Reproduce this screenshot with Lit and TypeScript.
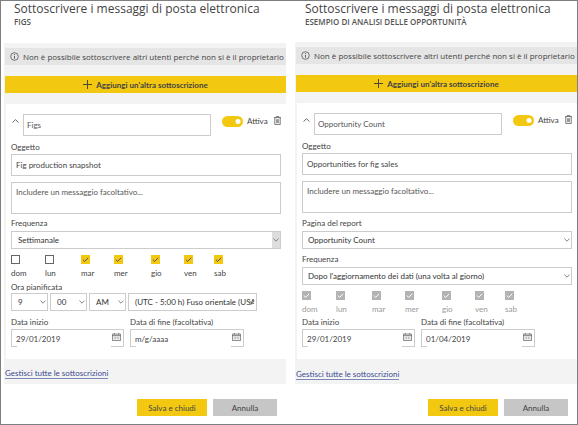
import { LitElement, html, css, svg, nothing } from "lit";
import { customElement, property } from "lit/decorators.js";
import { classMap } from "lit/directives/class-map.js";

interface Subscription {
  id: string;
  source: string;
  name: string;
  subject: string;
  page?: string;
  frequency: string;
  weekly: boolean;
  days: boolean[];
  start: string;
  end: string;
}

const DAYS = ["dom", "lun", "mar", "mer", "gio", "ven", "sab"];

const SUBSCRIPTIONS: Subscription[] = [
  {
    id: "figs",
    source: "FIGS",
    name: "Figs",
    subject: "Fig production snapshot",
    frequency: "Settimanale",
    weekly: true,
    days: [false, false, true, true, true, true, true],
    start: "29/01/2019",
    end: "m/g/aaaa",
  },
  {
    id: "opp",
    source: "ESEMPIO DI ANALISI DELLE OPPORTUNITÀ",
    name: "Opportunity Count",
    subject: "Opportunities for fig sales",
    page: "Opportunity Count",
    frequency: "Dopo l'aggiornamento dei dati (una volta al giorno)",
    weekly: false,
    days: [true, true, true, true, true, true, true],
    start: "29/01/2019",
    end: "01/04/2019",
  },
];

const infoIcon = svg`<svg class="icon" width="9" height="9" viewBox="0 0 9 9" fill="none" stroke="#555" aria-hidden="true">
  <circle cx="4.5" cy="4.5" r="3.8" stroke-width="0.8"/><path d="M4.5 4v2.7M4.5 2.2v1" stroke-width="0.9"/></svg>`;
const plusIcon = svg`<svg class="icon" width="9" height="9" viewBox="0 0 9 9" stroke="#4a4630" aria-hidden="true"><path d="M4.5 0v9M0 4.5h9"/></svg>`;
const upIcon = svg`<svg width="7" height="4" viewBox="0 0 7 4" fill="none" stroke="#666" aria-hidden="true"><path d="M.5 3.6 3.5.7l3 2.9"/></svg>`;
const downIcon = svg`<svg class="arrow" width="6" height="4" viewBox="0 0 6 4" fill="none" stroke="#777" aria-hidden="true"><path d="M.4.6 3 3.2 5.6.6" stroke-width="0.9"/></svg>`;
const tickIcon = svg`<svg class="tick" width="9" height="9" viewBox="0 0 9 9" fill="none" aria-hidden="true"><path d="M1.8 4.6l1.9 1.8 3.5-3.6"/></svg>`;
const trashIcon = svg`<svg width="7" height="9" viewBox="0 0 7 9" fill="none" stroke="#555" stroke-width="0.8" aria-hidden="true">
  <path d="M0 1.6h7M2.3 1.4V.4h2.4v1M.8 1.8v6.8h5.4V1.8"/><path d="M2.5 3.2v4M3.5 3.2v4M4.5 3.2v4" stroke-width="0.6"/></svg>`;
const calendarIcon = svg`<svg class="calendar" width="9" height="8" viewBox="0 0 9 8" fill="none" stroke="#666" stroke-width="0.8" aria-hidden="true">
  <path d="M.4 1.1h8.2v6.5H.4zM.4 2.6h8.2M2.3 0v1.4M6.7 0v1.4"/><path d="M1.6 4.2h5.8M1.6 5.8h5.8" stroke-dasharray="1 .6" stroke-width="0.7"/></svg>`;

@customElement("subscription-panel")
export class SubscriptionPanel extends LitElement {
  @property({ attribute: false }) data!: Subscription;

  static styles = css`
    :host { display: block; min-width: 0; color: #444; font: 8px/12px Lato, "Open Sans", sans-serif; }
    * { box-sizing: border-box; }
    svg { display: block; flex: none; }
    header { height: 42px; padding-left: 10px; font-family: "Open Sans", "Noto Sans", sans-serif; }
    h1 { margin: 0; font-size: 12px; line-height: 15px; font-weight: 400; white-space: nowrap; }
    h2 { margin: 0; font-size: 8px; line-height: 12px; font-weight: 600; color: #555; }
    .body { background: #f3f3f3; padding: 5px 0 0 1px; }
    .notice { display: flex; align-items: center; gap: 4px; height: 17px; margin: 0; padding-left: 5px; background: #e5e5e5; white-space: nowrap; font-family: "Open Sans", "Noto Sans", sans-serif; }
    button { font: inherit; color: inherit; border: 0; padding: 0; }
    .add { display: flex; align-items: center; justify-content: center; gap: 4px; width: 100%; height: 17px; margin: 11px 0; background: #f2c811; font-weight: 700; }
    .card { background: #fff; margin-left: 1px; padding: 10px 5px 12px; }
    .top { display: flex; align-items: flex-start; }
    .collapse { width: 12px; height: 13px; padding-left: 1px; background: none; display: flex; align-items: center; }
    .top .field { flex: 1; width: 0; color: #555; }
    .switch { display: flex; align-items: center; gap: 4px; width: 47px; margin-left: 11px; height: 14px; }
    .switch input { appearance: none; width: 21px; height: 11px; margin: 0; border-radius: 6px; background: radial-gradient(circle at 16px 50%, #fff 2px, #f2c811 3px); }
    .trash { background: none; margin: 2px 0 0 5px; }
    .field { display: block; width: 100%; height: 22px; margin: 0; padding: 0 4px; border: 1px solid #ccc; border-radius: 0; background: #fff; font: inherit; color: #444; outline: 0; resize: none; }
    .name { padding-left: 3px; }
    .caption { display: block; height: 12px; white-space: nowrap; }
    .subject { margin-top: 5px; }
    .subject .caption { margin-bottom: 1px; }
    textarea.field { height: 32px; margin-top: 6px; padding: 3px 4px; overflow: hidden; }
    textarea::placeholder { color: #555; opacity: 1; }
    .group { margin-top: 3px; }
    .report .group { margin-top: 4px; }
    .group .caption { margin-bottom: 2px; }
    .select { position: relative; display: block; }
    select.field { appearance: none; height: 18px; padding: 0 2px 0 6px; color: #333; }
    .report select.field { padding-left: 5px; }
    .arrow { position: absolute; right: 2px; top: 7px; pointer-events: none; }
    .filled select.field { background: linear-gradient(#ddd, #ddd) right / 8px 100% no-repeat; }
    .days { display: grid; grid-template-columns: 34px 36px 33px 37px 33px 30px auto; margin-top: 6px; }
    .day { position: relative; }
    .day input { appearance: none; display: block; width: 9px; height: 9px; margin: 0 0 3px; border: 1px solid #666; }
    .day input:checked { border: 0; background: #f2c811; }
    .day input:disabled { background: #b3b3b3; }
    .tick { position: absolute; left: 0; top: 0; pointer-events: none; stroke: #555; }
    .off { color: #999; }
    .off .tick { stroke: #fff; }
    .time { margin-top: 2px; }
    .time .row { display: grid; grid-template-columns: 37px 37px 37px 129px; gap: 2px; }
    .dates { display: grid; grid-template-columns: 113px 114px; gap: 6px; margin-top: 5px; }
    .report .dates { margin-top: 1px; }
    .dates .caption { margin-bottom: 1px; }
    .date { position: relative; }
    .date .field { height: 18px; border-bottom: 0;
      background: linear-gradient(#ccc, #ccc) left bottom / 5px 1px no-repeat, linear-gradient(#ccc, #ccc) right bottom / 12px 1px no-repeat; }
    .calendar { position: absolute; right: 3px; top: 4px; }
    .manage { height: 25px; padding-top: 8px; }
    .report .manage { padding-top: 9px; }
    a { display: inline-block; height: 12px; color: #3b4a92; text-decoration: none; border-bottom: 1px solid #7d88b8; }
    footer { display: flex; justify-content: flex-end; gap: 6px; padding: 15px 9px 7px; }
    footer button { height: 17px; }
    .save { width: 70px; background: #f2c811; }
    .cancel { width: 64px; background: #c6c6c6; }
    .report header { height: 41px; }
    .report h2 { line-height: 11px; }
  `;

  private dropdown(label: string, value: string, filled = false, id = "") {
    return html`<span class=${classMap({ select: true, filled })}>
      <select class="field" id=${id || nothing} aria-label=${id ? nothing : label}><option>${value}</option></select>${downIcon}
    </span>`;
  }

  private date(id: string, label: string, value: string) {
    return html`<div>
      <label class="caption" for=${id}>${label}</label>
      <div class="date"><input class="field" id=${id} .value=${value} />${calendarIcon}</div>
    </div>`;
  }

  render() {
    const d = this.data;
    return html`<section class=${classMap({ report: !d.weekly })}>
      <header><h1>Sottoscrivere i messaggi di posta elettronica</h1><h2>${d.source}</h2></header>
      <div class="body">
        <p class="notice">${infoIcon}<span>Non è possibile sottoscrivere altri utenti perché non si è il proprietario</span></p>
        <button class="add">${plusIcon}<span>Aggiungi un'altra sottoscrizione</span></button>
        <div class="card">
          <div class="top">
            <button class="collapse" aria-label="Comprimi">${upIcon}</button>
            <input class="field name" aria-label="Nome" .value=${d.name} />
            <label class="switch"><input type="checkbox" role="switch" checked />Attiva</label>
            <button class="trash" aria-label="Elimina">${trashIcon}</button>
          </div>
          <div class="subject">
            <label class="caption" for="subject">Oggetto</label>
            <input class="field" id="subject" .value=${d.subject} />
          </div>
          <textarea class="field" aria-label="Messaggio" placeholder="Includere un messaggio facoltativo..."></textarea>
          ${d.page
            ? html`<div class="group"><label class="caption" for="page">Pagina del report</label>${this.dropdown("", d.page, false, "page")}</div>`
            : nothing}
          <div class="group">
            <label class="caption" for="frequency">Frequenza</label>
            ${this.dropdown("", d.frequency, d.weekly, "frequency")}
          </div>
          <div class=${classMap({ days: true, off: !d.weekly })}>
            ${DAYS.map((day, i) => html`<label class="day">
              <input type="checkbox" .checked=${d.days[i]} ?disabled=${!d.weekly} />${d.days[i] ? tickIcon : nothing}${day}
            </label>`)}
          </div>
          ${d.weekly
            ? html`<div class="time">
                <label class="caption" for="hour">Ora pianificata</label>
                <div class="row">
                  ${this.dropdown("", "9", false, "hour")}
                  ${this.dropdown("Minuti", "00")}
                  ${this.dropdown("AM o PM", "AM")}
                  ${this.dropdown("Fuso orario", "(UTC - 5:00 h) Fuso orientale (USA e")}
                </div>
              </div>`
            : nothing}
          <div class="dates">
            ${this.date("start", "Data inizio", d.start)}
            ${this.date("end", "Data di fine (facoltativa)", d.end)}
          </div>
        </div>
        <div class="manage"><a href="#">Gestisci tutte le sottoscrizioni</a></div>
      </div>
      <footer><button class="save">Salva e chiudi</button><button class="cancel">Annulla</button></footer>
    </section>`;
  }
}

@customElement("app-root")
export class AppRoot extends LitElement {
  static styles = css`
    :host { display: block; }
    .page { box-sizing: border-box; min-height: 100vh; display: grid; grid-template-columns: minmax(0, 1fr) minmax(0, 1fr); gap: 9px; padding-left: 3px; border: 1px solid #7f7f7f; background: #fff; }
  `;

  render() {
    return html`<main class="page">
      ${SUBSCRIPTIONS.map((s) => html`<subscription-panel .data=${s}></subscription-panel>`)}
    </main>`;
  }
}
